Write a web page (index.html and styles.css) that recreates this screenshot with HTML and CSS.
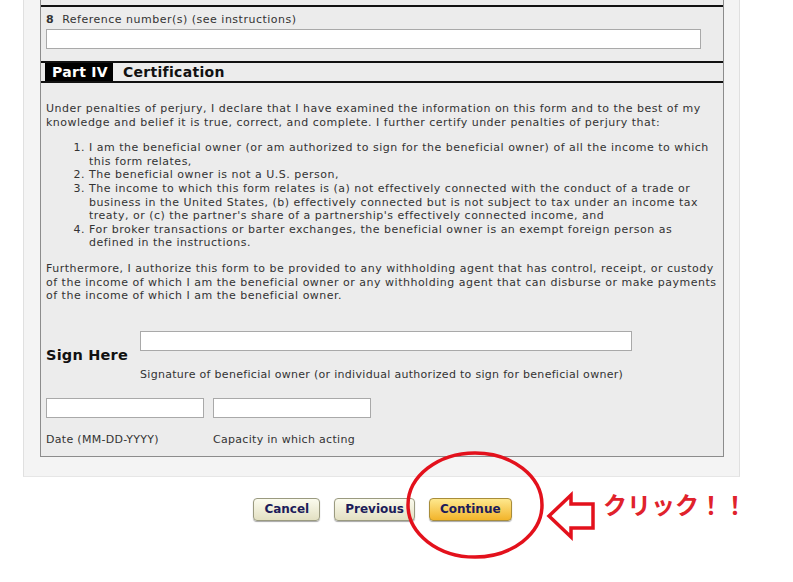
FILE: index.html
```html
<!DOCTYPE html>
<html lang="en">
<head>
    <meta charset="UTF-8">
    <title>Certification</title>
    <link rel="stylesheet" href="styles.css">
</head>
<body>
<div class="page">
    <div class="panel">
        <div class="form-box">
            <div class="prev-tail"></div>
            <div class="field-ref">
                <div class="field-label"><b>8</b>&nbsp; Reference number(s) (see instructions)</div>
                <input class="text-input ref-input" type="text">
            </div>
            <div class="part-head">
                <span class="part-no">Part IV</span>
                <span class="part-title">Certification</span>
            </div>
            <div class="cert-body">
                <p>Under penalties of perjury, I declare that I have examined the information on this form and to the best of my knowledge and belief it is true, correct, and complete. I further certify under penalties of perjury that:</p>
                <ol>
                    <li>I am the beneficial owner (or am authorized to sign for the beneficial owner) of all the income to which this form relates,</li>
                    <li>The beneficial owner is not a U.S. person,</li>
                    <li>The income to which this form relates is (a) not effectively connected with the conduct of a trade or business in the United States, (b) effectively connected but is not subject to tax under an income tax treaty, or (c) the partner's share of a partnership's effectively connected income, and</li>
                    <li>For broker transactions or barter exchanges, the beneficial owner is an exempt foreign person as defined in the instructions.</li>
                </ol>
                <p>Furthermore, I authorize this form to be provided to any withholding agent that has control, receipt, or custody of the income of which I am the beneficial owner or any withholding agent that can disburse or make payments of the income of which I am the beneficial owner.</p>

                <div class="sign-row">
                    <div class="sign-label">Sign Here</div>
                    <div class="sign-field">
                        <input class="text-input sig-input" type="text">
                        <div class="caption">Signature of beneficial owner (or individual authorized to sign for beneficial owner)</div>
                    </div>
                </div>

                <div class="date-row">
                    <div class="small-field">
                        <input class="text-input short-input" type="text">
                        <div class="caption">Date (MM-DD-YYYY)</div>
                    </div>
                    <div class="small-field">
                        <input class="text-input short-input" type="text">
                        <div class="caption">Capacity in which acting</div>
                    </div>
                </div>
            </div>
        </div>
    </div>

    <div class="actions">
        <button class="btn">Cancel</button>
        <button class="btn">Previous</button>
        <button class="btn btn-primary">Continue</button>
    </div>

    <svg class="mark" width="793" height="582" viewBox="0 0 793 582">
        <ellipse cx="475" cy="505" rx="67" ry="52" fill="none" stroke="#e3111c" stroke-width="3.5"/>
        <path d="M549 516 L571 495 L571 504 L593 504 L593 528 L571 528 L571 537 Z" fill="none" stroke="#e3111c" stroke-width="3.5" stroke-linejoin="miter"/>
    </svg>
    <div class="click-note">クリック！！</div>
</div>
</body>
</html>
```

FILE: styles.css
```css
body {
    margin: 0;
    background: #fff;
    font-family: "DejaVu Sans", Verdana, sans-serif;
    color: #333;
}

.page {
    position: relative;
    width: 793px;
    height: 582px;
    overflow: hidden;
}

.panel {
    margin-left: 23px;
    width: 717px;
    background: #f4f4f4;
    border-left: 1px solid #e0e0e0;
    border-right: 1px solid #e0e0e0;
    border-bottom: 1px solid #e6e6e6;
    padding: 0 16px 19px 16px;
    box-sizing: border-box;
}

.form-box {
    background: #ececec;
    border: 1px solid #8c8c8c;
    border-top: none;
    width: 684px;
    box-sizing: border-box;
}

.prev-tail {
    height: 5px;
    border-bottom: 2px solid #111;
}

.field-ref {
    padding: 6px 5px 12px 5px;
    border-bottom: 2px solid #111;
}

.field-label {
    font-size: 11px;
    line-height: 14px;
    letter-spacing: 0.5px;
    margin-bottom: 2px;
}

.text-input {
    display: block;
    height: 20px;
    box-sizing: border-box;
    border: 1px solid #a9a9a9;
    background: #fff;
    margin: 0;
    padding: 0;
}

.ref-input {
    width: 655px;
}

.part-head {
    height: 18px;
    display: flex;
    align-items: stretch;
    border-bottom: 2px solid #111;
    padding-left: 4px;
    font-weight: bold;
    font-size: 14px;
    letter-spacing: 0.3px;
}

.part-no {
    background: #000;
    color: #fff;
    padding: 0 5px 0 7px;
    line-height: 18px;
}

.part-title {
    color: #111;
    padding-left: 10px;
    line-height: 18px;
}

.cert-body {
    padding: 19px 2px 10px 5px;
    font-size: 11px;
    line-height: 13.6px;
    letter-spacing: 0.5px;
}

.cert-body p {
    margin: 0 0 12px 0;
}

.cert-body ol {
    margin: 0 0 12px 0;
    padding-left: 43px;
}

.sign-row {
    display: flex;
    align-items: flex-start;
    margin-top: 28px;
}

.sign-label {
    width: 94px;
    font-size: 14.5px;
    font-weight: bold;
    letter-spacing: 0.2px;
    color: #111;
    padding-top: 18px;
}

.sig-input {
    width: 492px;
}

.caption {
    font-size: 11px;
    line-height: 12px;
    letter-spacing: 0.3px;
    margin-top: 18px;
}

.date-row {
    display: flex;
    gap: 9px;
    margin-top: 17px;
}

.short-input {
    width: 158px;
}

.date-row .caption {
    margin-top: 16px;
}

.actions {
    display: flex;
    justify-content: center;
    gap: 14px;
    width: 765px;
    margin-top: 21px;
}

.btn {
    font-family: "DejaVu Sans", Verdana, sans-serif;
    font-weight: bold;
    font-size: 12px;
    color: #1c1c5a;
    height: 23px;
    padding: 0 10px;
    border: 1px solid #9a9a80;
    border-radius: 4px;
    background: linear-gradient(#fbfbee, #e3e0c2);
    box-shadow: 0 1px 1px rgba(0,0,0,0.35);
}

.btn-primary {
    background: linear-gradient(#fee88e, #f2b42a);
    border-color: #a88d3a;
}

.mark {
    position: absolute;
    top: 0;
    left: 0;
    pointer-events: none;
}

.click-note {
    position: absolute;
    left: 603px;
    top: 489px;
    font-family: "Noto Sans CJK JP", sans-serif;
    font-weight: bold;
    font-size: 24px;
    line-height: 30px;
    color: #e0222c;
}
```
